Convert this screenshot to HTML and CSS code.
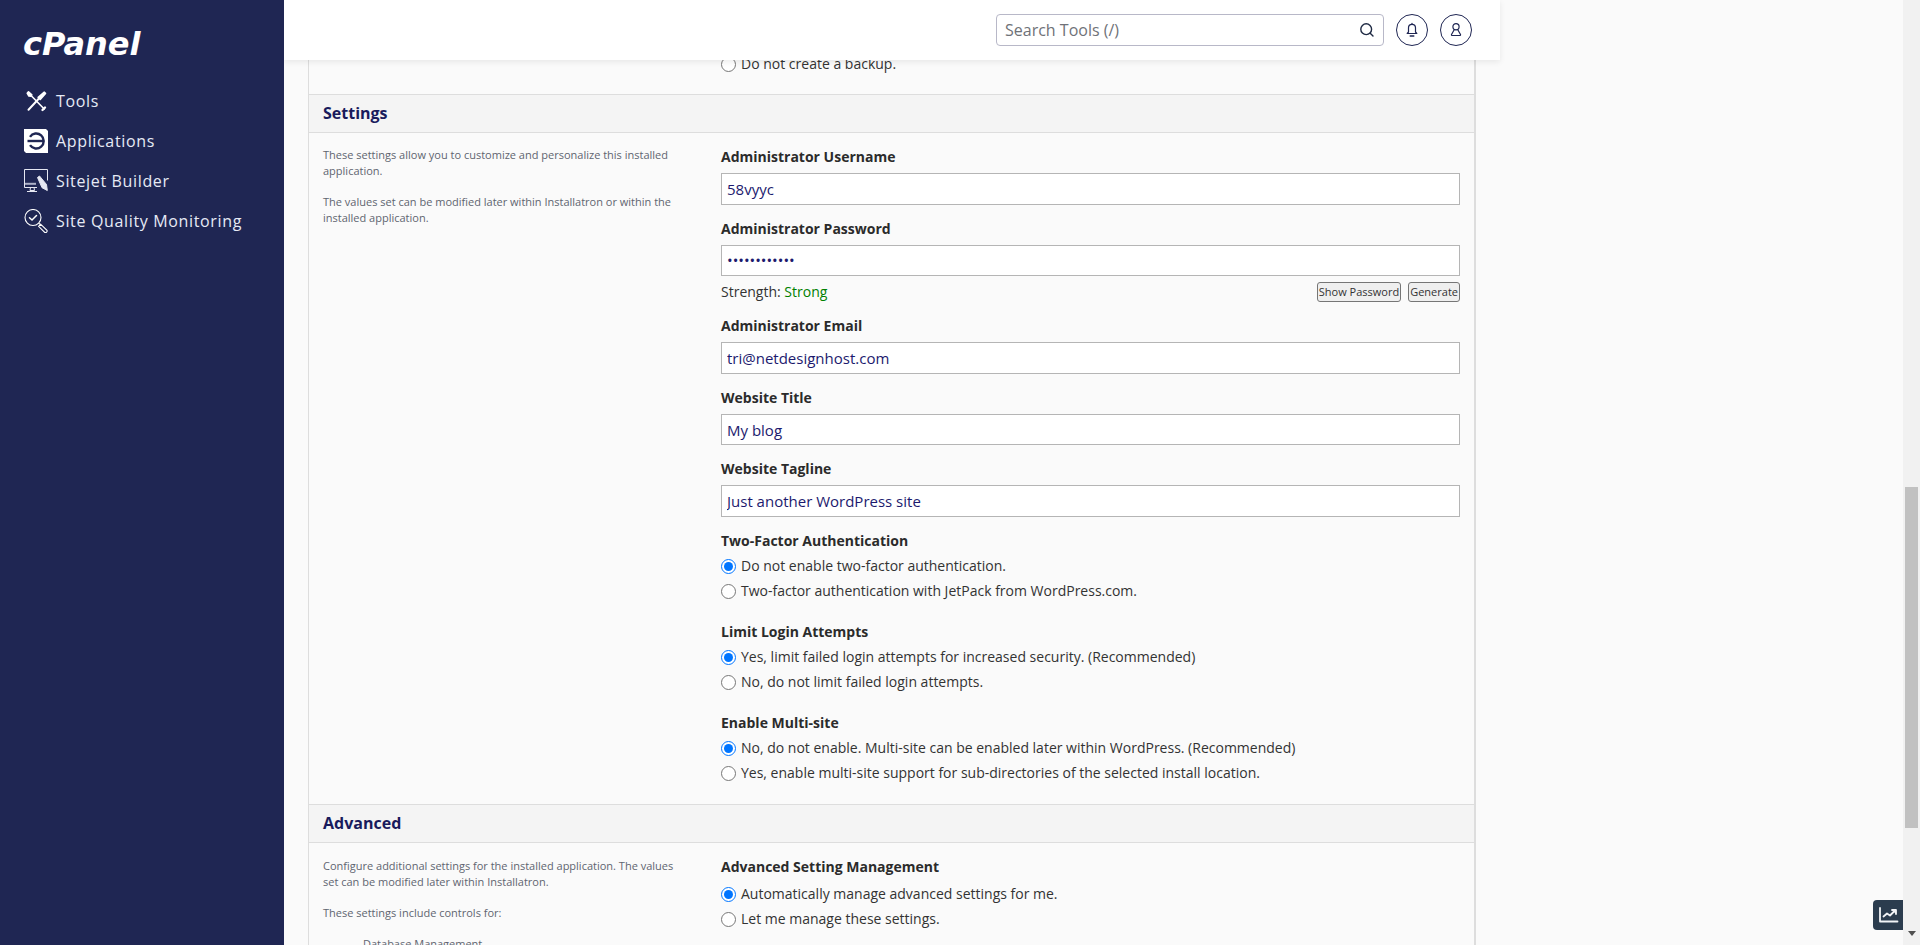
FILE: index.html
```html
<!DOCTYPE html>
<html lang="en">
<head>
<meta charset="utf-8">
<title>cPanel - WordPress install</title>
<link rel="stylesheet" href="styles.css">
</head>
<body>
<div class="app">
  <nav class="sidebar">
    <div class="logo">cPanel</div>
    <ul class="nav">
      <li class="nav-item">
        <svg class="nav-icon" viewBox="0 0 24 24" fill="none" stroke="#fff" stroke-width="1.600" stroke-linecap="round" stroke-linejoin="round"><path d="M4.500 2.800 3.200 4.200 4.900 7 7 7.200 7.800 5.800z" fill="#fff"/><path d="M7 6.500 20.200 20"/><path d="M18.500 21l2.500-2.500" stroke-width="2.400"/><path d="M20.300 3.200l1.200 1.200-5.300 6-2-2z" fill="#fff"/><path d="M14.500 10 4.500 20.800" stroke-width="2"/></svg>
        <span>Tools</span>
      </li>
      <li class="nav-item">
        <svg class="nav-icon" viewBox="0 0 24 24"><path d="M0 0H22L24 2V24H2L0 22Z" fill="#fff"/><path d="M6 7.800A7.500 7.500 0 1 1 6 16.200" fill="none" stroke="#1f2653" stroke-width="2.400"/><path d="M3.500 12H20" stroke="#1f2653" stroke-width="2.400" fill="none"/></svg>
        <span>Applications</span>
      </li>
      <li class="nav-item">
        <svg class="nav-icon" viewBox="0 0 24 24" fill="none" stroke="#e6e8f2" stroke-width="1"><path d="M13 18.500H.5V.5h23v11"/><path d="M1 14.800h11" stroke-width="2" stroke="#aeb2c8"/><path d="M6.500 18.500 6 21.500h4.500L10 18.500M3 22.500h10"/><path d="M13.500 8.500l2-1.500 7 8.500.8 6-5.300-2.800z" fill="#e6e8f2"/></svg>
        <span>Sitejet Builder</span>
      </li>
      <li class="nav-item">
        <svg class="nav-icon" viewBox="0 0 24 24" fill="none" stroke="#fff" stroke-width="1.100" stroke-linecap="round"><circle cx="9" cy="8.500" r="8"/><path d="M5.500 8.800 8 11l4.500-4.500" stroke-width="1.500"/><path d="M15 14.500l1.500 1"/><path d="M16.800 15.300l6.200 6a1.700 1.700 0 0 1-2.200 2.200l-6.200-6.200z"/></svg>
        <span>Site Quality Monitoring</span>
      </li>
    </ul>
  </nav>

  <main class="main">
    <header class="topbar">
      <div class="search">
        <span class="search-text">Search Tools (/)</span>
        <svg class="search-icon" viewBox="0 0 16 16" fill="none" stroke="#1f2a44" stroke-width="1.400" stroke-linecap="round"><circle cx="7.200" cy="7.200" r="5.400"/><path d="M11.200 11.200 14 14"/></svg>
      </div>
      <button class="round-btn" type="button" aria-label="Notifications">
        <svg viewBox="0 0 16 16" fill="none" stroke="#1f2653" stroke-width="1.200" stroke-linecap="round" stroke-linejoin="round"><path d="M3.200 11.500h9.600l-1.300-1.500V5.800a3.500 3.500 0 0 0-7 0V10z"/><path d="M8 1.400v.9"/><path d="M6.200 14h3.600" stroke-width="1.400"/></svg>
      </button>
      <button class="round-btn" type="button" aria-label="Account">
        <svg viewBox="0 0 16 16" fill="none" stroke="#1f2653" stroke-width="1.200" stroke-linecap="round" stroke-linejoin="round"><circle cx="8" cy="4.700" r="3.100"/><path d="M6.200 7.800 3.500 12.500c-.2.600.1 1 .7 1h7.600c.6 0 .9-.4.7-1L9.800 7.800"/></svg>
      </button>
    </header>

    <div class="panel">
      <div class="backup-row">
        <label class="radio"><input type="radio" name="backup"><span>Do not create a backup.</span></label>
      </div>

      <section class="section">
        <h2 class="section-head">Settings</h2>
        <div class="section-body">
          <div class="desc">
            <p>These settings allow you to customize and personalize this installed application.</p>
            <p>The values set can be modified later within Installatron or within the installed application.</p>
          </div>
          <div class="fields">
            <div class="field">
              <label class="field-label">Administrator Username</label>
              <input class="text-input" type="text" value="58vyyc">
            </div>
            <div class="field field-pass">
              <label class="field-label">Administrator Password</label>
              <input class="text-input" type="password" value="aB3dE6gH9jK2">
              <div class="strength-row">
                <span>Strength: <span class="strong">Strong</span></span>
                <span class="pass-actions">
                  <button class="small-btn" type="button">Show Password</button>
                  <button class="small-btn" type="button">Generate</button>
                </span>
              </div>
            </div>
            <div class="field">
              <label class="field-label">Administrator Email</label>
              <input class="text-input" type="text" value="tri@netdesignhost.com">
            </div>
            <div class="field">
              <label class="field-label">Website Title</label>
              <input class="text-input" type="text" value="My blog">
            </div>
            <div class="field">
              <label class="field-label">Website Tagline</label>
              <input class="text-input" type="text" value="Just another WordPress site">
            </div>
            <div class="group">
              <div class="field-label">Two-Factor Authentication</div>
              <label class="radio"><input type="radio" name="tfa" checked><span>Do not enable two-factor authentication.</span></label>
              <label class="radio"><input type="radio" name="tfa"><span>Two-factor authentication with JetPack from WordPress.com.</span></label>
            </div>
            <div class="group">
              <div class="field-label">Limit Login Attempts</div>
              <label class="radio"><input type="radio" name="limit" checked><span>Yes, limit failed login attempts for increased security. (Recommended)</span></label>
              <label class="radio"><input type="radio" name="limit"><span>No, do not limit failed login attempts.</span></label>
            </div>
            <div class="group">
              <div class="field-label">Enable Multi-site</div>
              <label class="radio"><input type="radio" name="multi" checked><span>No, do not enable. Multi-site can be enabled later within WordPress. (Recommended)</span></label>
              <label class="radio"><input type="radio" name="multi"><span>Yes, enable multi-site support for sub-directories of the selected install location.</span></label>
            </div>
          </div>
        </div>
      </section>

      <section class="section section-adv">
        <h2 class="section-head">Advanced</h2>
        <div class="section-body">
          <div class="desc">
            <p>Configure additional settings for the installed application. The values set can be modified later within Installatron.</p>
            <p>These settings include controls for:</p>
            <ul class="desc-list"><li>Database Management</li></ul>
          </div>
          <div class="fields">
            <div class="group">
              <div class="field-label">Advanced Setting Management</div>
              <label class="radio"><input type="radio" name="adv" checked><span>Automatically manage advanced settings for me.</span></label>
              <label class="radio"><input type="radio" name="adv"><span>Let me manage these settings.</span></label>
            </div>
          </div>
        </div>
      </section>
    </div>

    <button class="chart-btn" type="button" aria-label="Statistics">
      <svg viewBox="0 0 20 20" fill="none" stroke="#f2f4f7" stroke-width="1.800" stroke-linecap="round" stroke-linejoin="round"><path d="M1.500 3v13.500h17.500"/><path d="M5 11.500l3.500-3 3 2 5-5"/><path d="M13.500 5h4v4" fill="#f2f4f7"/></svg>
    </button>
  </main>

  <aside class="scrollbar" aria-hidden="true">
    <div class="scroll-up"></div>
    <div class="scroll-thumb"></div>
    <div class="scroll-down"></div>
  </aside>
</div>
</body>
</html>
```

FILE: styles.css
```css
* { box-sizing: border-box; }

html, body {
  margin: 0;
  height: 100%;
  overflow: hidden;
}

body {
  font-family: "Open Sans", "Noto Sans", sans-serif;
  font-size: 14px;
  line-height: 20px;
  color: #333;
  background: #fafafa;
}

.app {
  display: flex;
  height: 945px;
  overflow: hidden;
}

/* Sidebar */
.sidebar {
  flex: 0 0 284px;
  background: #1f2653;
  color: #e6eaf5;
  padding: 26px 0 0 23px;
}

.logo {
  font-family: "DejaVu Sans", "Open Sans", sans-serif;
  font-weight: 700;
  font-style: italic;
  font-size: 32px;
  line-height: 36px;
  letter-spacing: 0;
  color: #fff;
  height: 55px;
}

.nav {
  list-style: none;
  margin: 0;
  padding: 0 0 0 1px;
}

.nav-item {
  display: flex;
  align-items: center;
  gap: 8px;
  height: 40px;
  font-size: 16px;
  letter-spacing: 0.65px;
}

.nav-icon {
  flex: 0 0 24px;
  width: 24px;
  height: 24px;
}

/* Main column */
.main {
  position: relative;
  flex: 1;
  min-width: 0;
  overflow: hidden;
}

.topbar {
  position: absolute;
  top: 0;
  left: 0;
  z-index: 2;
  width: 1216px;
  height: 60px;
  display: flex;
  align-items: center;
  justify-content: flex-end;
  gap: 12px;
  padding-right: 28px;
  background: #fff;
  box-shadow: 0 2px 6px rgba(0, 0, 0, 0.08);
}

.search {
  display: flex;
  align-items: center;
  justify-content: space-between;
  width: 388px;
  height: 32px;
  padding: 0 8px;
  border: 1px solid #b8b8c8;
  border-radius: 4px;
  background: #fff;
}

.search-text {
  font-size: 16px;
  color: #6f7278;
}

.search-icon {
  width: 16px;
  height: 16px;
}

.round-btn {
  width: 32px;
  height: 32px;
  padding: 7px;
  border: 1px solid #1f2653;
  border-radius: 50%;
  background: #fff;
}

.round-btn svg {
  display: block;
  width: 16px;
  height: 16px;
}

/* Panel */
.panel {
  width: 1168px;
  margin-left: 24px;
  border-left: 1px solid #ddd;
  border-right: 2px solid #ddd;
  background: #fafafa;
}

.backup-row {
  height: 94px;
  padding: 54px 0 0 412px;
}

.section-head {
  margin: 0;
  height: 39px;
  padding: 0 14px;
  border-top: 1px solid #ddd;
  border-bottom: 1px solid #ddd;
  background: #f4f4f4;
  color: #191b5c;
  font-size: 16px;
  font-weight: 700;
  line-height: 36px;
}

.section-body {
  display: flex;
  padding: 14px 14px 0 14px;
}

.desc {
  flex: 0 0 398px;
  width: 398px;
  padding-right: 38px;
  font-size: 11px;
  line-height: 16px;
  color: #5f6570;
}

.desc p {
  margin: 0 0 15px;
}

.section-adv .desc {
  padding-top: 1px;
}

.desc-list {
  margin: 0;
  padding-left: 40px;
  list-style: none;
}

.fields {
  flex: 1;
  min-width: 0;
}

.field {
  margin-bottom: 14px;
}

.field-pass {
  margin-bottom: 13px;
}

.field-label {
  display: block;
  height: 22px;
  margin-bottom: 4px;
  font-size: 14px;
  font-weight: 700;
  line-height: 20px;
  color: #2b2b2b;
}

.text-input {
  display: block;
  width: 100%;
  height: 31.6px;
  padding: 0 5px;
  border: 1px solid #b5b5b5;
  border-radius: 0;
  background: #fff;
  font-family: inherit;
  font-size: 15px;
  color: #1c1a6e;
  outline: none;
}

.strength-row {
  display: flex;
  align-items: center;
  justify-content: space-between;
  height: 27px;
  padding-top: 5px;
}

.strong {
  color: #008000;
}

.pass-actions {
  display: flex;
  gap: 7px;
}

.small-btn {
  height: 20px;
  padding: 0 1px;
  border: 1px solid #767676;
  border-radius: 3px;
  background: #efefef;
  font-family: inherit;
  font-size: 11px;
  line-height: 16px;
  color: #333;
}

.group {
  margin-bottom: 18px;
}

.group .field-label {
  margin-bottom: 1px;
}

.section-adv .group .field-label {
  margin-bottom: 3px;
}

.radio {
  display: flex;
  align-items: center;
  height: 25px;
}

.radio input {
  flex: 0 0 15px;
  width: 15px;
  height: 15px;
  margin: 0 5px 0 0;
}

.backup-row .radio {
  height: 20px;
}

/* Floating stats button */
.chart-btn {
  position: absolute;
  right: 0;
  top: 900px;
  z-index: 3;
  width: 30px;
  height: 30px;
  padding: 5px 4px 5px 5px;
  border: 0;
  border-radius: 4px 0 0 4px;
  background: #2b3c4e;
}

.chart-btn svg {
  display: block;
  width: 21px;
  height: 20px;
}

/* Page scrollbar */
.scrollbar {
  flex: 0 0 17px;
  display: flex;
  flex-direction: column;
  align-items: center;
  background: #f1f1f1;
}

.scroll-up {
  height: 487px;
}

.scroll-thumb {
  width: 13px;
  height: 341px;
  background: #c1c1c1;
}

.scroll-down {
  width: 0;
  height: 0;
  margin-top: 103px;
  border-left: 4px solid transparent;
  border-right: 4px solid transparent;
  border-top: 5px solid #505050;
}
```
